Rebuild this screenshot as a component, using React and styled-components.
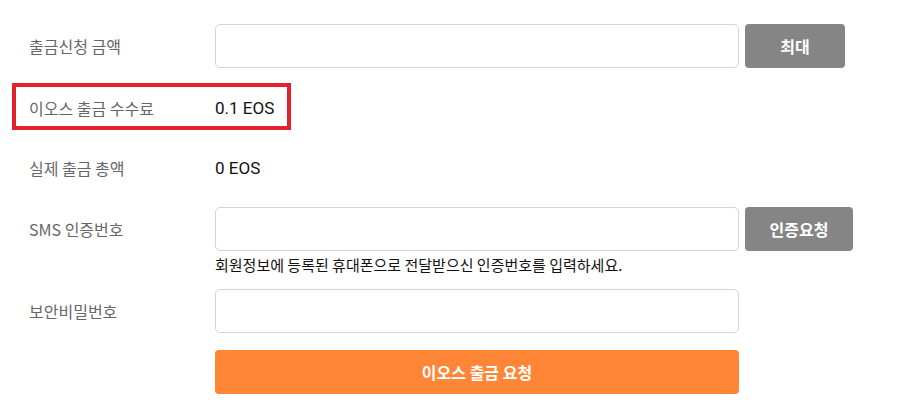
import React, { useState } from 'react';
import styled, { createGlobalStyle } from 'styled-components';

const GlobalStyle = createGlobalStyle`
  body {
    margin: 0;
    background: #fff;
    font-family: "Noto Sans CJK KR", "Noto Sans", sans-serif;
  }
`;

function App() {
  const [amount, setAmount] = useState('');
  const [sms, setSms] = useState('');
  const [pin, setPin] = useState('');

  return (
    <Page>
      <GlobalStyle />
      <Row $top={24} $height={44}>
        <Label>출금신청 금액</Label>
        <Field>
          <Input type="text" value={amount} onChange={(e) => setAmount(e.target.value)} />
          <GrayButton $width={100}>최대</GrayButton>
        </Field>
      </Row>

      <Row $top={20} $height={40}>
        <Highlight />
        <Label $h={40}>이오스 출금 수수료</Label>
        <Value>0.1 EOS</Value>
      </Row>

      <Row $top={20} $height={40}>
        <Label $h={40}>실제 출금 총액</Label>
        <Value>0 EOS</Value>
      </Row>

      <Row $top={19}>
        <Label>SMS 인증번호</Label>
        <div>
          <Field>
            <Input type="text" value={sms} onChange={(e) => setSms(e.target.value)} />
            <GrayButton $width={108}>인증요청</GrayButton>
          </Field>
          <Help>회원정보에 등록된 휴대폰으로 전달받으신 인증번호를 입력하세요.</Help>
        </div>
      </Row>

      <Row $top={14} $height={44}>
        <Label>보안비밀번호</Label>
        <Field>
          <Input type="password" value={pin} onChange={(e) => setPin(e.target.value)} />
        </Field>
      </Row>

      <Row $top={17} $height={44}>
        <span />
        <SubmitButton>이오스 출금 요청</SubmitButton>
      </Row>
    </Page>
  );
}

export default App;

const Page = styled.div`
  padding: 0 0 0 29px;
  width: 868px;
`;

const Row = styled.div`
  position: relative;
  display: grid;
  grid-template-columns: 186px auto;
  align-items: start;
  margin-top: ${(p) => p.$top}px;
  height: ${(p) => (p.$height ? `${p.$height}px` : 'auto')};
`;

const Highlight = styled.div`
  position: absolute;
  left: -17px;
  top: -5px;
  width: 279px;
  height: 47px;
  box-sizing: border-box;
  border: 4px solid #e3202b;
  pointer-events: none;
`;

const Label = styled.div`
  height: ${(p) => p.$h || 44}px;
  line-height: ${(p) => p.$h || 44}px;
  font-size: 16px;
  color: #666;
  white-space: nowrap;
`;

const Value = styled.div`
  height: 40px;
  line-height: 40px;
  font-size: 17px;
  color: #111;
  font-family: Roboto, "Noto Sans CJK KR", sans-serif;
`;

const Field = styled.div`
  display: flex;
  gap: 6px;
  height: 44px;
`;

const Input = styled.input`
  width: 524px;
  height: 44px;
  box-sizing: border-box;
  border: 1px solid #d4d4d4;
  border-radius: 5px;
  padding: 0 10px;
  font-size: 15px;
  outline: none;
`;

const GrayButton = styled.button`
  width: ${(p) => p.$width}px;
  height: 44px;
  border: none;
  border-radius: 4px;
  background-color: #858585;
  color: #fff;
  font-family: "Noto Sans CJK KR", sans-serif;
  font-size: 16px;
  font-weight: bold;
  cursor: pointer;
`;

const Help = styled.div`
  margin-top: 3px;
  line-height: 21px;
  font-size: 15px;
  color: #111;
`;

const SubmitButton = styled.button`
  width: 524px;
  height: 44px;
  border: none;
  border-radius: 4px;
  background-color: #ff8636;
  color: #fff;
  font-family: "Noto Sans CJK KR", sans-serif;
  font-size: 16px;
  font-weight: bold;
  cursor: pointer;
`;
